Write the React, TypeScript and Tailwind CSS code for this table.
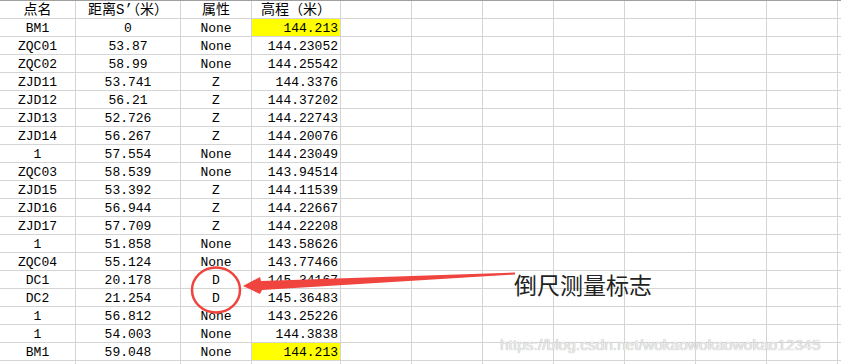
const rows: [string, string, string, string, boolean?][] = [
  ['BM1', '0', 'None', '144.213', true],
  ['ZQC01', '53.87', 'None', '144.23052'],
  ['ZQC02', '58.99', 'None', '144.25542'],
  ['ZJD11', '53.741', 'Z', '144.3376'],
  ['ZJD12', '56.21', 'Z', '144.37202'],
  ['ZJD13', '52.726', 'Z', '144.22743'],
  ['ZJD14', '56.267', 'Z', '144.20076'],
  ['1', '57.554', 'None', '144.23049'],
  ['ZQC03', '58.539', 'None', '143.94514'],
  ['ZJD15', '53.392', 'Z', '144.11539'],
  ['ZJD16', '56.944', 'Z', '144.22667'],
  ['ZJD17', '57.709', 'Z', '144.22208'],
  ['1', '51.858', 'None', '143.58626'],
  ['ZQC04', '55.124', 'None', '143.77466'],
  ['DC1', '20.178', 'D', '145.34167'],
  ['DC2', '21.254', 'D', '145.36483'],
  ['1', '56.812', 'None', '143.25226'],
  ['1', '54.003', 'None', '144.3838'],
  ['BM1', '59.048', 'None', '144.213', true],
]

const blanks = [0, 1, 2, 3, 4, 5, 6]

function Row({ cells, yellow, header = false }: { cells: string[]; yellow?: boolean; header?: boolean }) {
  const base = 'h-[18px] shrink-0 border-r border-b border-[#d4d4d4] flex items-end pb-px'
  return (
    <div className="flex">
      <div className={`${base} w-[76px] justify-center`}>{cells[0]}</div>
      <div className={`${base} w-[105px] justify-center`}>{cells[1]}</div>
      <div className={`${base} w-[71px] justify-center`}>{cells[2]}</div>
      <div
        className={`${base} w-[89px] ${header ? 'justify-center' : 'justify-end pr-[2px]'} ${
          yellow ? 'bg-[#ffff00]' : ''
        }`}
      >
        {cells[3]}
      </div>
      {blanks.map((i) => (
        <div key={i} className={`${base} w-[71px]`} />
      ))}
      <div className="h-[18px] grow border-b border-[#d4d4d4]" />
    </div>
  )
}

export default function App() {
  return (
    <div className="relative w-[841px] h-[364px] overflow-hidden bg-white text-black">
      <div className="border-t border-[#a0a0a0] font-['Liberation_Mono','Noto_Sans_CJK_SC',monospace] text-[13px] leading-none">
        <div className="text-[14px]">
          <Row header cells={['点名', '距离S’（米）', '属性', '高程（米）']} />
        </div>
        {rows.map((r, i) => (
          <Row key={i} cells={[r[0], r[1], r[2], r[3]]} yellow={r[4]} />
        ))}
        <Row cells={['', '', '', '']} />
      </div>

      {/* annotation */}
      <svg className="absolute left-0 top-0" width="841" height="364">
        <ellipse cx="216" cy="290" rx="24" ry="22.5" fill="none" stroke="#f0443e" strokeWidth="2.5" />
        <polygon
          points="243,286 260,277 261,281 515,272.5 515,274.5 262,290 260,294"
          fill="#f0443e"
        />
      </svg>
      <div className="absolute left-[514px] top-[270px] font-['Noto_Sans_CJK_SC',sans-serif] text-[23px] leading-[28px] text-[#222]">
        倒尺测量标志
      </div>
      <div className="absolute left-[500px] top-[335px] font-['Liberation_Sans',sans-serif] text-[15.5px] leading-[20px] text-[#ececec] [text-shadow:0_0_1px_#9a9a9a]">
        https://blog.csdn.net/wokaowokaowokao12345
      </div>
    </div>
  )
}
